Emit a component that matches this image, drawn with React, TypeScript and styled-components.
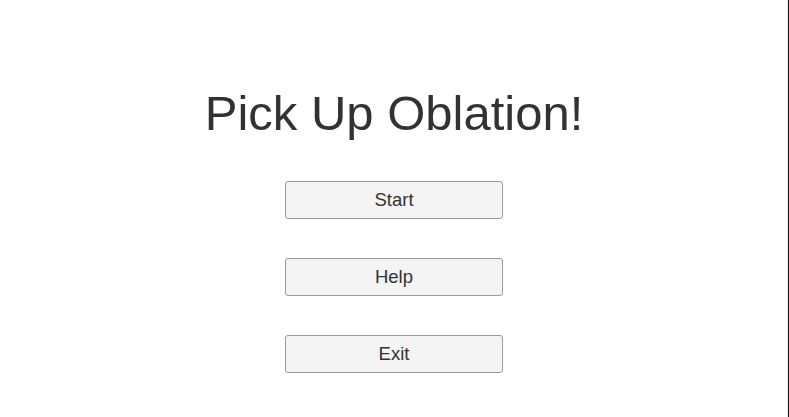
import React from "react";
import styled, { createGlobalStyle } from "styled-components";

const GlobalStyle = createGlobalStyle`
  html, body {
    margin: 0;
    padding: 0;
    background: #ffffff;
  }
  body {
    font-family: "Liberation Sans", Arial, sans-serif;
  }
`;

const Screen = styled.div`
  box-sizing: border-box;
  width: 789px;
  height: 417px;
  display: flex;
  flex-direction: column;
  align-items: center;
  background: #ffffff;
  border-right: 1px solid #161616;
  box-shadow: inset -3px 0 0 -2px #ececec;
`;

const Title = styled.h1`
  margin: 85px 0 0;
  font-size: 49px;
  font-weight: normal;
  line-height: 56px;
  color: #323232;
`;

const Menu = styled.div`
  display: flex;
  flex-direction: column;
  gap: 39px;
  margin-top: 40px;
`;

const MenuButton = styled.button`
  box-sizing: border-box;
  width: 218px;
  height: 38px;
  padding: 0;
  border: 1px solid #9a9a9a;
  border-radius: 3px;
  background: #f4f4f4;
  color: #323232;
  font-family: "Liberation Sans", Arial, sans-serif;
  font-size: 18.5px;
  cursor: pointer;
`;

export default function App() {
  return (
    <>
      <GlobalStyle />
      <Screen>
        <Title>Pick Up Oblation!</Title>
        <Menu>
          <MenuButton>Start</MenuButton>
          <MenuButton>Help</MenuButton>
          <MenuButton>Exit</MenuButton>
        </Menu>
      </Screen>
    </>
  );
}
